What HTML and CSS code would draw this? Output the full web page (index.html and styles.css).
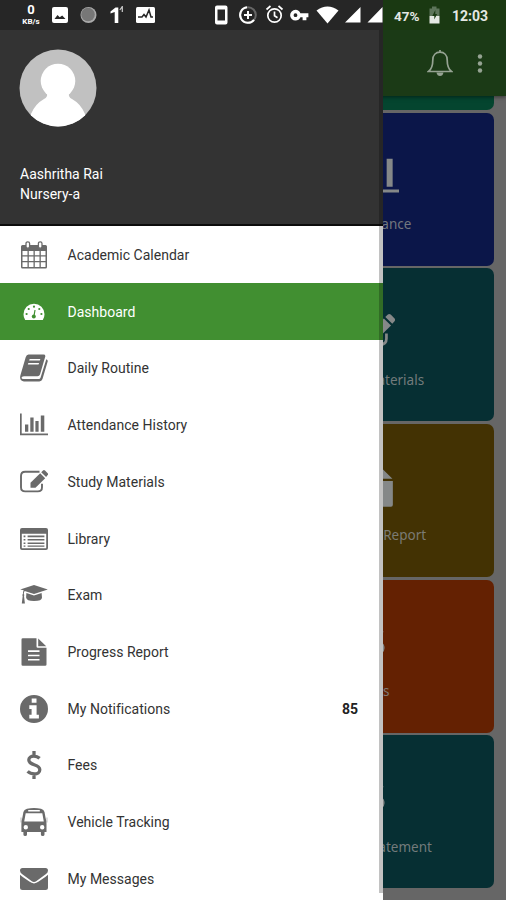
FILE: index.html
```
<!DOCTYPE html>
<html lang="en">
<head>
    <meta charset="UTF-8">
    <meta name="viewport" content="width=device-width, initial-scale=1.0">
    <title>Dashboard</title>
    <link rel="stylesheet" href="styles.css">
</head>
<body>

<!-- Shared icons -->
<svg class="defs">
    <symbol id="dollar" viewBox="0 0 28 28">
        <path d="M14 0v4M14 24v4M19.600 7.300C18 5.800 16 5.100 13.800 5.100c-3 0-5 1.600-5 4 0 5.700 11 3.600 11 9.600 0 2.700-2.400 4.300-5.400 4.300-2.800 0-5-.9-6.800-2.600" fill="none" stroke="currentColor" stroke-width="3.300"/>
    </symbol>
    <symbol id="chart" viewBox="0 0 28 28">
        <path d="M0 2.500h1.700v20H28v1.700H0zM5 13.500h3.300v7.300H5zM10.300 6.500h3.300v14.300h-3.300zM15.400 10h3.200v10.800h-3.200zM20.800 4.500h3.500v16.300h-3.500z" fill="currentColor"/>
    </symbol>
    <symbol id="edit" viewBox="0 0 28 28">
        <path d="M19.500 3.800H5.200Q1 3.800 1 8v11.200q0 4.200 4.200 4.200h12.600q4.200 0 4.200-4.200v-3.500" fill="none" stroke="currentColor" stroke-width="1.900"/>
        <path d="M10.500 19.700v-5L20.200 5.200l5 5-9.700 9.500z" fill="currentColor"/>
        <path d="M21.200 4.200l1.800-1.800q1-.8 2 .1l2.700 2.700q.8 1 0 1.900l-1.600 1.900z" fill="currentColor"/>
    </symbol>
    <symbol id="file" viewBox="0 0 28 28">
        <path d="M1.500 1.500Q1.500.2 2.800.2H16.500v8.300q0 1.300 1.300 1.300h8.700v16.700q0 1.300-1.300 1.300H2.800q-1.300 0-1.300-1.300zM18.200.4l8 7.900h-8zM8 12.300v1.600h11.500v-1.600zM8 16.700v1.600h11.500v-1.600zM8 21v1.600h11.500V21z" fill="currentColor" fill-rule="evenodd"/>
    </symbol>
</svg>

<div class="screen">
    <header class="toolbar">
        <svg class="bell" viewBox="0 0 26 28">
            <path d="M1.500 22.500c3.500-2.800 4.300-6.500 4.300-11.500 0-5 3-7.800 7.200-7.800s7.200 2.800 7.200 7.800c0 5 .8 8.700 4.300 11.500zM13 3V1" fill="none" stroke="currentColor" stroke-width="1.700"/>
            <path d="M9.500 23.500h7q-.7 3.600-3.500 3.600t-3.500-3.600z" fill="currentColor"/>
        </svg>
        <svg class="more" viewBox="0 0 6 20">
            <g fill="currentColor"><circle cx="3" cy="3" r="2.200"/><circle cx="3" cy="10" r="2.200"/><circle cx="3" cy="17" r="2.200"/></g>
        </svg>
    </header>

    <main class="cards">
        <div class="card green"></div>
        <div class="card blue"><svg class="card-icon wide"><use href="#chart"/></svg><span>Attendance</span></div>
        <div class="card teal"><svg class="card-icon"><use href="#edit"/></svg><span>Study Materials</span></div>
        <div class="card brown"><svg class="card-icon"><use href="#file"/></svg><span>Progress Report</span></div>
        <div class="card orange"><svg class="card-icon small"><use href="#dollar"/></svg><span>Fees</span></div>
        <div class="card teal"><svg class="card-icon small"><use href="#dollar"/></svg><span>Ledger Statement</span></div>
    </main>
</div>

<aside class="drawer">
    <div class="profile">
        <svg class="avatar" viewBox="0 0 78 78">
            <clipPath id="round"><circle cx="39" cy="39" r="38.500"/></clipPath>
            <circle cx="39" cy="39" r="38.500" fill="#c1c1c1"/>
            <g clip-path="url(#round)" fill="#fff">
                <circle cx="39" cy="32" r="17.300"/>
                <path d="M28 44h22q-1 4 3 6 9 5 13 15v13H12V65q4-10 13-15 4-2 3-6z"/>
            </g>
        </svg>
        <div class="name">Aashritha Rai</div>
        <div class="grade">Nursery-a</div>
    </div>

    <nav class="menu">
        <a class="item">
            <svg class="icon" viewBox="0 0 28 28">
                <path d="M1 5.500q0-1.500 1.500-1.500h23q1.500 0 1.500 1.500V26q0 1.500-1.500 1.500h-23Q1 27.500 1 26zM2.500 10v4.200h5V10zM8.800 10v4.200h4.700V10zM14.800 10v4.200h4.700V10zM20.800 10v4.200h4.700V10zM2.500 15.500v4.500h5v-4.500zM8.800 15.500v4.500h4.700v-4.500zM14.800 15.500v4.500h4.700v-4.500zM20.800 15.500v4.500h4.700v-4.500zM2.500 21.300v4.700h5v-4.700zM8.800 21.300v4.700h4.700v-4.700zM14.800 21.300v4.700h4.700v-4.700zM20.800 21.300v4.700h4.700v-4.700z" fill="currentColor" fill-rule="evenodd"/>
                <g fill="#fff" stroke="currentColor" stroke-width="1.300"><rect x="6" y=".8" width="3.600" height="6.400" rx="1.700"/><rect x="18.400" y=".8" width="3.600" height="6.400" rx="1.700"/></g>
            </svg>
            <span>Academic Calendar</span>
        </a>
        <a class="item active">
            <svg class="icon" viewBox="0 0 28 28">
                <path d="M5.200 22Q3.500 19.500 3.500 16.200a10.500 10.500 0 0 1 21 0q0 3.300-1.700 5.800z" fill="#fff"/>
                <g fill="#418f31"><circle cx="6.600" cy="16" r="1.100"/><circle cx="8.700" cy="11" r="1.100"/><circle cx="14" cy="8.700" r="1.100"/><circle cx="19.300" cy="11" r="1.100"/><circle cx="21.400" cy="16" r="1.100"/><circle cx="13.800" cy="18.500" r="2"/></g>
                <path d="M13.900 18.500l1.100-6.500" stroke="#418f31" stroke-width="1.200"/>
            </svg>
            <span>Dashboard</span>
        </a>
        <a class="item">
            <svg class="icon" viewBox="0 0 28 28">
                <path d="M8.500.5h15q2.300 0 1.700 2.200L20 20.500q-.6 1.800-2.500 1.800H4q-2.500 0-2.500 1.500 0 1.200 2 1.200h15.300q1.300 0 1.700-1.300l5.800-18.500q1.900.6 1.300 2.600L22.500 25q-.8 2.400-3.200 2.400H4Q.3 27.400.1 23.600q0-1.600.6-3.300L5.700 3.200Q6.500.5 8.500.5zM9.700 5l-.6 1.600h10.700l.6-1.600zM8.400 9l-.6 1.600h10.700l.6-1.600z" fill="currentColor" fill-rule="evenodd"/>
            </svg>
            <span>Daily Routine</span>
        </a>
        <a class="item">
            <svg class="icon"><use href="#chart"/></svg>
            <span>Attendance History</span>
        </a>
        <a class="item">
            <svg class="icon"><use href="#edit"/></svg>
            <span>Study Materials</span>
        </a>
        <a class="item">
            <svg class="icon" viewBox="0 0 28 28">
                <path d="M2 3h24q2 0 2 2v18q0 2-2 2H2q-2 0-2-2V5q0-2 2-2zM1.800 8.700v14q0 .6.600.6h23.200q.6 0 .6-.6v-14zM3.600 10.600h1.800v1.600H3.600zM7.600 10.600h16.800v1.600H7.600zM3.600 14h1.800v1.600H3.600zM7.600 14h16.800v1.600H7.600zM3.600 17.400h1.800V19H3.600zM7.600 17.400h16.800V19H7.600zM3.600 20.500h1.800v1.200H3.600zM7.600 20.500h16.800v1.200H7.600z" fill="currentColor" fill-rule="evenodd"/>
            </svg>
            <span>Library</span>
        </a>
        <a class="item">
            <svg class="icon" viewBox="0 0 28 28">
                <path d="M14 4l13.800 4.400L14 12.900 4.700 9.900q-.9 1-.9 3 1 .8.200 2l.9 7.500H1.800l.9-7.500q-1-1.200.2-2 0-2.200.8-3.600L.2 8.400zM6.400 12l7.600 2.500 7.600-2.500.4 4.500q0 3.500-8 3.500-7.500 0-7.900-3.500z" fill="currentColor"/>
            </svg>
            <span>Exam</span>
        </a>
        <a class="item">
            <svg class="icon"><use href="#file"/></svg>
            <span>Progress Report</span>
        </a>
        <a class="item">
            <svg class="icon" viewBox="0 0 28 28">
                <path d="M14 0a14 14 0 1 1 0 28 14 14 0 0 1 0-28zM11.700 3.500v4.200h4.800V3.500zM9.300 10.300v3.600h2.300v5.900H9.300v3.700h9.600v-3.700h-2.300v-9.500z" fill="currentColor" fill-rule="evenodd"/>
            </svg>
            <span>My Notifications</span>
            <b class="count">85</b>
        </a>
        <a class="item">
            <svg class="icon"><use href="#dollar"/></svg>
            <span>Fees</span>
        </a>
        <a class="item">
            <svg class="icon" viewBox="0 0 28 28">
                <path d="M7 .8Q14-.8 21 .8q3 .7 3.500 3.200l1 5.500q1 3.500 1 6.500v8h-2v2.500q0 1.500-1.800 1.500t-1.800-1.500V24H7v2.500Q7 28 5.200 28t-1.800-1.500V24h-2v-8q0-3 1-6.500l1-5.500Q4 1.500 7 .8zM8.200 2v1.600h11.600V2zM5.700 5.200L4.200 13.500h19.600l-1.500-8.300zM5.800 17a2.200 2.200 0 1 0 0 4.400 2.200 2.200 0 0 0 0-4.400zM22.200 17a2.200 2.200 0 1 0 0 4.400 2.200 2.200 0 0 0 0-4.400z" fill="currentColor" fill-rule="evenodd"/>
                <path d="M.3 9.500h1.500v5H.3zM26.200 9.500h1.500v5h-1.500z" fill="currentColor" opacity=".3"/>
            </svg>
            <span>Vehicle Tracking</span>
        </a>
        <a class="item">
            <svg class="icon" viewBox="0 0 28 28">
                <path d="M2.500 3h23Q28 3 28 5.500q0 2-2 3.600L16.500 16q-2.500 1.800-5 0L2 9.100Q0 7.500 0 5.500 0 3 2.500 3zM0 9.800q.8.900 9.300 6.800 4.700 3.600 9.400 0 8.500-5.900 9.300-6.800v12.700q0 2.500-2.500 2.500h-23Q0 25 0 22.500z" fill="currentColor"/>
            </svg>
            <span>My Messages</span>
        </a>
    </nav>
    <div class="scrollbar"></div>
</aside>

<div class="statusbar">
    <div class="speed"><b>0</b><small>KB/s</small></div>
    <svg class="status-icons" viewBox="0 0 506 30">
        <!-- picture, dot, app, activity -->
        <rect x="52" y="7" width="16" height="16" rx="2" fill="#fff"/>
        <path d="M54.500 19l3-4 2.200 2.300 2.500-1.800 3.300 3.500z" fill="#262626"/>
        <circle cx="88.500" cy="15" r="8" fill="#aaa"/>
        <circle cx="88" cy="14.500" r="6.800" fill="#777"/>
        <path d="M110.500 11.500l5-4h2.800V23h-3.600V12l-4.200 1.500z" fill="#fff"/>
        <path d="M122.300 6v6M119.800 10l2.500-3.500" fill="none" stroke="#ccc" stroke-width="1.200"/>
        <rect x="136" y="7" width="19" height="16" rx="1.500" fill="#fff"/>
        <path d="M138 17h4l2-2.500 2 2.500 3-7 2 7h2" fill="none" stroke="#262626" stroke-width="1.500"/>
        <!-- phone, data saver, alarm, key -->
        <path d="M217 5.500h8.500q2 0 2 2v15q0 2-2 2H217q-2 0-2-2v-15q0-2 2-2zM217.500 9.500v11H225v-11z" fill="#fff" fill-rule="evenodd"/>
        <circle cx="248" cy="15" r="7.800" fill="none" stroke="#666" stroke-width="2"/>
        <path d="M247 7.300a7.800 7.800 0 1 0 7 12.600M248 11v8M244 15h8" fill="none" stroke="#fff" stroke-width="2"/>
        <circle cx="274.500" cy="15.500" r="6.700" fill="none" stroke="#fff" stroke-width="1.700"/>
        <path d="M274.500 11.500v4.300l3 2M266.500 9.500l4-3.500M282.500 9.500l-4-3.500" fill="none" stroke="#fff" stroke-width="1.700"/>
        <path d="M295.500 9.800q3.500 0 4.900 3.500h8v4h-2v3h-3.800v-3h-2.200q-1.400 3.300-4.900 3.300a5.400 5.400 0 0 1 0-10.800zm0 3.500a1.900 1.900 0 1 0 0 3.800 1.900 1.900 0 0 0 0-3.800z" fill="#fff" fill-rule="evenodd"/>
        <!-- wifi, signal, signal -->
        <path d="M316.500 10.500q11-8 22 0l-11 13z" fill="#fff"/>
        <path d="M360.500 7v15.500h-15.500zM382.500 7v15.500h-15z" fill="#fff"/>
        <!-- battery -->
        <path d="M429.500 8.500h2.500V6.500h4.500v2h3v7.500h-10z" fill="#5d755a"/>
        <path d="M429.500 16h10v7.500h-10z" fill="#e4e8e3"/>
        <path d="M435.300 10l-3 6h2v3.500l2.800-5.500h-1.800z" fill="#1a3a12"/>
    </svg>
    <span class="battery">47%</span>
    <span class="clock">12:03</span>
</div>

</body>
</html>
```
FILE: styles.css
```
* {
    box-sizing: border-box;
}
body {
    font-family: Roboto, "Liberation Sans", sans-serif;
    margin: 0;
    height: 900px;
    background-color: #666;
    overflow: hidden;
    position: relative;
}
.defs {
    display: none;
}

/* Dimmed dashboard behind the drawer */
.toolbar {
    height: 96px;
    padding: 30px 22px 0 0;
    background-color: #1b3a16;
    color: #96a393;
    display: flex;
    justify-content: flex-end;
    align-items: center;
    gap: 24px;
    position: relative;
    z-index: 1;
    box-shadow: 0 1px 4px rgba(0, 0, 0, 0.5);
}
.bell {
    width: 26px;
    height: 28px;
}
.more {
    width: 6px;
    height: 21px;
    margin-right: 1px;
}
.cards {
    display: grid;
    grid-template-columns: 238px;
    grid-auto-rows: 153px;
    gap: 2.650px;
    justify-content: end;
    padding-right: 12px;
    margin-top: -139px;
}
.card {
    border-radius: 7px;
    padding-top: 43px;
    display: flex;
    flex-direction: column;
    align-items: center;
    gap: 19.500px;
    color: #858888;
    font-family: "Noto Sans", sans-serif;
    font-size: 13.500px;
    line-height: 18px;
}
.card span {
    opacity: 0.85;
}
.card-icon {
    width: 40px;
    height: 40px;
}
.card-icon.wide {
    width: 48px;
    height: 48px;
    margin: -5px 0 -3px;
}
.card-icon.small {
    width: 36px;
    height: 36px;
    margin: 1px 0 3px;
}
.green { background-color: #04452f; }
.blue { background-color: #0b1649; }
.teal { background-color: #062f33; }
.brown { background-color: #433203; }
.orange { background-color: #642102; }

/* Drawer */
.drawer {
    position: absolute;
    top: 0;
    left: 0;
    z-index: 2;
    width: 383px;
    height: 900px;
    background-color: #fff;
    overflow: hidden;
}
.profile {
    height: 226px;
    padding: 49px 19px 0;
    background-color: #333;
    border-bottom: 2px solid #0c0c0c;
    color: #fff;
    font-size: 14px;
    line-height: 19.500px;
}
.avatar {
    display: block;
    width: 78px;
    height: 78px;
    margin-bottom: 38px;
}
.name, .grade {
    padding-left: 1px;
}
.menu {
    padding-top: 0.600px;
}
.item {
    height: 56.720px;
    padding: 0 25px 0 20px;
    display: flex;
    align-items: center;
    color: #6a6a6a;
}
.item span {
    margin-left: 19.500px;
    color: #333;
    font-size: 14px;
    letter-spacing: 0.020px;
}
.item.active {
    background-color: #418f31;
}
.item.active span {
    color: #fff;
}
.icon {
    width: 28px;
    height: 28px;
}
.count {
    margin-left: auto;
    color: #222;
    font-size: 14px;
}
.scrollbar {
    position: absolute;
    top: 30px;
    right: 0;
    width: 4px;
    height: 863px;
    background-color: rgba(0, 0, 0, 0.24);
}

/* Status bar */
.statusbar {
    position: absolute;
    top: 0;
    left: 0;
    z-index: 3;
    width: 506px;
    height: 30px;
    background: linear-gradient(to right, #262626 383px, #1a3912 383px);
    color: #fff;
}
.status-icons {
    position: absolute;
    inset: 0;
}
.speed {
    position: absolute;
    left: 20px;
    top: 2px;
    width: 22px;
    display: flex;
    flex-direction: column;
    align-items: center;
    font-size: 13px;
    line-height: 15px;
}
.speed small {
    font-size: 8px;
    font-weight: bold;
    line-height: 10px;
}
.battery, .clock {
    position: absolute;
    top: 7px;
    left: 394px;
    font-size: 13.500px;
    font-weight: bold;
    line-height: 18px;
    color: #e4e8e3;
}
.clock {
    left: 452px;
    font-size: 14px;
}
```
